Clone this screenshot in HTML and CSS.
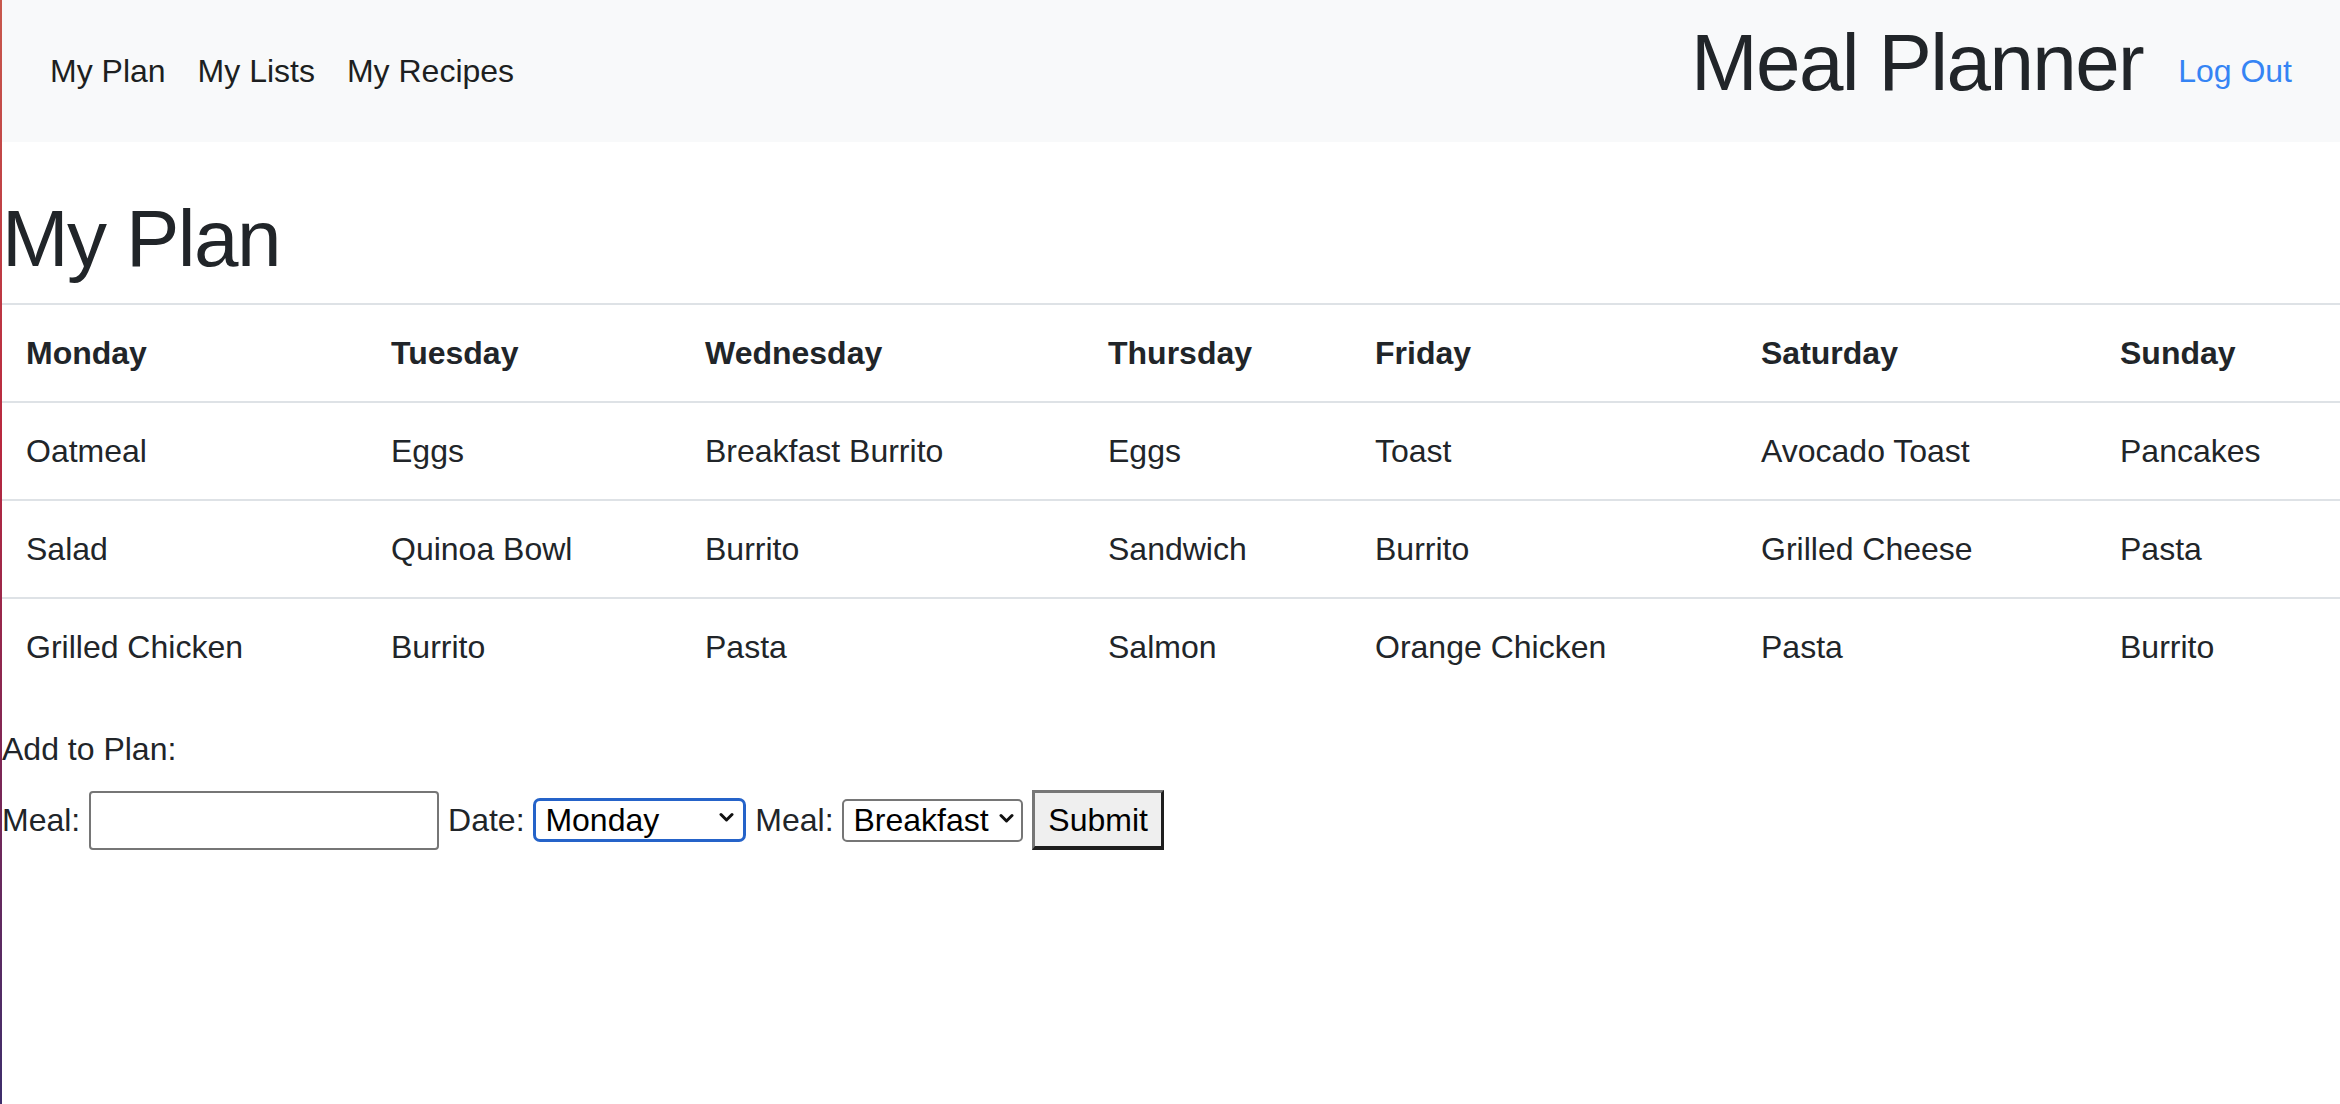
FILE: index.html
```html
<!DOCTYPE html>
<html lang="en">
<head>
<meta charset="utf-8">
<title>Meal Planner</title>
<link rel="stylesheet" href="styles.css">
</head>
<body>
<nav class="navbar">
  <ul class="nav">
    <li><a class="nav-link" href="#">My Plan</a></li>
    <li><a class="nav-link" href="#">My Lists</a></li>
    <li><a class="nav-link" href="#">My Recipes</a></li>
  </ul>
  <div class="nav-right">
    <h1 class="brand">Meal Planner</h1>
    <a class="nav-link logout" href="#">Log Out</a>
  </div>
</nav>
<main class="main">
  <h1 class="page-title">My Plan</h1>
  <table class="plan">
    <colgroup>
      <col class="c-mon"><col class="c-tue"><col class="c-wed"><col class="c-thu"><col class="c-fri"><col class="c-sat"><col class="c-sun">
    </colgroup>
    <thead>
      <tr><th>Monday</th><th>Tuesday</th><th>Wednesday</th><th>Thursday</th><th>Friday</th><th>Saturday</th><th>Sunday</th></tr>
    </thead>
    <tbody>
      <tr><td>Oatmeal</td><td>Eggs</td><td>Breakfast Burrito</td><td>Eggs</td><td>Toast</td><td>Avocado Toast</td><td>Pancakes</td></tr>
      <tr><td>Salad</td><td>Quinoa Bowl</td><td>Burrito</td><td>Sandwich</td><td>Burrito</td><td>Grilled Cheese</td><td>Pasta</td></tr>
      <tr><td>Grilled Chicken</td><td>Burrito</td><td>Pasta</td><td>Salmon</td><td>Orange Chicken</td><td>Pasta</td><td>Burrito</td></tr>
    </tbody>
  </table>
  <div class="add-title">Add to Plan:</div>
  <form class="add-form">
    <label>Meal:</label> <input class="text-in" type="text"> <label>Date:</label> <span class="sel-wrap"><select class="sel sel-day focus"><option>Monday</option><option>Tuesday</option><option>Wednesday</option><option>Thursday</option><option>Friday</option><option>Saturday</option><option>Sunday</option></select><svg class="chev" width="15" height="11" viewBox="0 0 15 11"><path d="M2 2.5 L7.5 8 L13 2.5" fill="none" stroke="#111" stroke-width="3" stroke-linecap="round" stroke-linejoin="round"/></svg></span> <label>Meal:</label> <span class="sel-wrap"><select class="sel sel-meal"><option>Breakfast</option><option>Lunch</option><option>Dinner</option></select><svg class="chev chev-meal" width="15" height="11" viewBox="0 0 15 11"><path d="M2 2.5 L7.5 8 L13 2.5" fill="none" stroke="#111" stroke-width="3" stroke-linecap="round" stroke-linejoin="round"/></svg></span> <button class="submit" type="button">Submit</button>
  </form>
</main>
</body>
</html>
```
FILE: styles.css
```css
html, body {
  margin: 0;
  padding: 0;
}
body {
  font-family: "Liberation Sans", Arial, sans-serif;
  font-size: 32px;
  line-height: 1.5;
  color: #212529;
  background: #fff;
  min-height: 100vh;
  box-sizing: border-box;
  border-left: 2px solid #b4203f;
  border-image: linear-gradient(to bottom, #c8584c 0%, #b8283f 40%, #7c2656 70%, #3d2e6c 100%) 1;
}
.navbar {
  display: flex;
  justify-content: space-between;
  align-items: center;
  padding: 15px 32px;
  background: #f8f9fa;
}
.nav {
  display: flex;
  list-style: none;
  margin: 0;
  padding: 0;
}
.nav-link {
  display: block;
  padding: 16px;
  color: #1d1f21;
  text-decoration: none;
}
.nav-right {
  display: flex;
  align-items: center;
}
.brand {
  margin: 0 19px 16px 0;
  font-size: 80px;
  line-height: 96px;
  font-weight: 500;
  letter-spacing: -1.6px;
  color: #212529;
}
.logout {
  color: #3584f4;
}
.main {
  display: block;
}
.page-title {
  margin: 49px 0 16px;
  font-size: 80px;
  line-height: 96px;
  font-weight: 500;
  letter-spacing: -1.6px;
}
.plan {
  width: 100%;
  table-layout: fixed;
  border-collapse: collapse;
  margin-bottom: 30px;
}
.c-mon { width: 365px; }
.c-tue { width: 314px; }
.c-wed { width: 403px; }
.c-thu { width: 267px; }
.c-fri { width: 386px; }
.c-sat { width: 359px; }
.c-sun { width: auto; }
.plan th, .plan td {
  padding: 24px;
  border-top: 2px solid #dee2e6;
  text-align: left;
  vertical-align: top;
  line-height: 48px;
  white-space: nowrap;
}
.plan th {
  font-weight: bold;
}
.add-title {
  margin: 0 0 17px;
}
.add-form {
  margin: 0;
}
.add-form label {
  color: #212529;
}
.text-in {
  box-sizing: border-box;
  width: 350px;
  height: 59px;
  padding: 3px 6px;
  border: 2px solid #767676;
  border-radius: 4px;
  font-family: inherit;
  font-size: 32px;
  line-height: 48px;
  vertical-align: baseline;
  background: #fff;
}
.sel-wrap {
  position: relative;
  display: inline-block;
}
.sel {
  -webkit-appearance: none;
  appearance: none;
  box-sizing: border-box;
  font-family: inherit;
  font-size: 32px;
  color: #000;
  background: #fff;
  margin: 0;
}
.sel-day {
  width: 213px;
  height: 44px;
  line-height: 38px;
  padding: 0 30px 0 9px;
  border: 3px solid #2563c9;
  border-radius: 7px;
}
.sel-meal {
  width: 181px;
  height: 43px;
  line-height: 39px;
  padding: 0 30px 0 9px;
  border: 2px solid #767676;
  border-radius: 5px;
}
.chev {
  position: absolute;
  right: 12px;
  top: 16px;
  pointer-events: none;
}
.chev-meal {
  right: 9px;
  top: 17px;
}
.submit {
  box-sizing: border-box;
  height: 60px;
  padding: 2px 13px 2px;
  font-family: inherit;
  font-size: 32px;
  line-height: 48px;
  color: #000;
  background: #efefef;
  border-style: solid;
  border-width: 3px 3px 4px 3px;
  border-color: #767676 #1e1e1e #1e1e1e #767676;
  border-radius: 0;
}
```
